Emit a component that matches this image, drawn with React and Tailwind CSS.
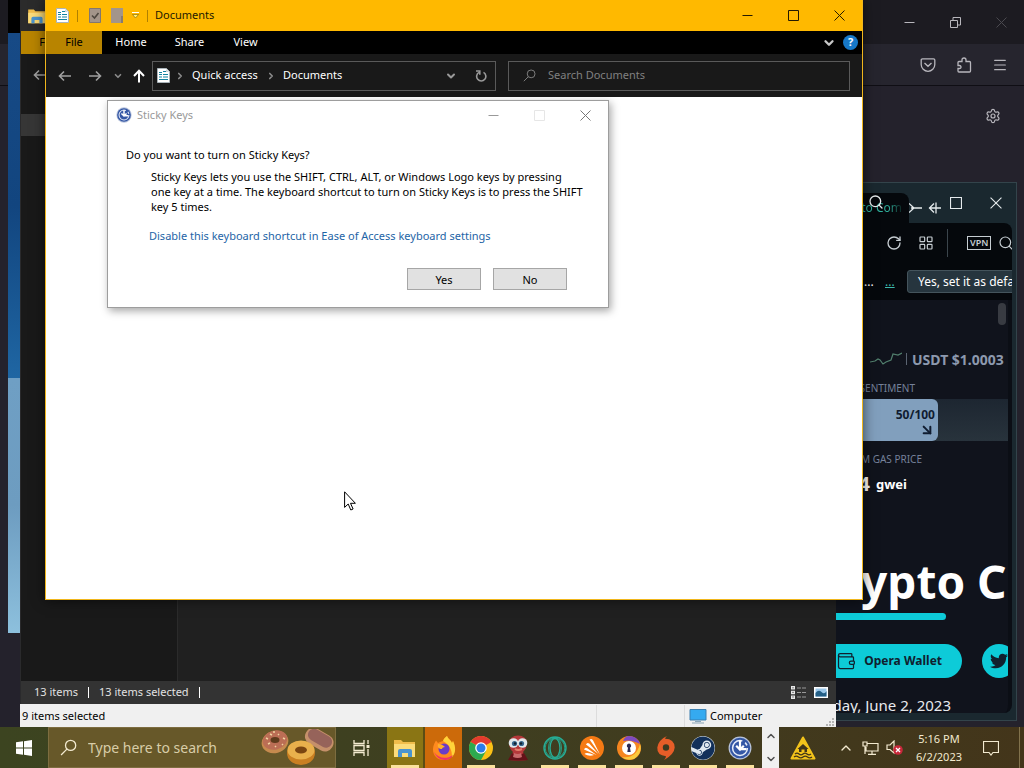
import { ArrowDownRight, ChevronDown, ChevronUp, LayoutGrid, Menu, RotateCw, Search, Settings, Wallet } from 'lucide-react';
import { FaSteam, FaTwitter } from 'react-icons/fa';

function DocIcon({ className }) {
  return (
    <svg viewBox="0 0 13 15" className={className}>
      <path d="M.5.5h9l3 3v11H.5z" fill="#fff" stroke="#aab4ba" />
      <path d="M2 4.5h3M6 3.5h3M2 6.5h3M6 6.5h5M2 9h3M6 9h5M2 11.5h9" stroke="#1583a0" strokeWidth="1.2" />
      <path d="M9 1v3h3z" fill="#c9d5da" />
    </svg>
  );
}

function FolderIcon({ className }) {
  return (
    <svg viewBox="0 0 22 20" className={className}>
      <path d="M0 2h7l2 2h12v15H0z" fill="#f0bd4b" />
      <path d="M0 6h21v13H0z" fill="#fbdc7a" />
      <path d="M4 19v-6q0-2 2-2h10q2 0 2 2v6h-4v-4H8v4z" fill="#4a94cf" />
    </svg>
  );
}

function AccessIcon({ className }) {
  return (
    <svg viewBox="0 0 22 22" className={className}>
      <circle cx="11" cy="11" r="10.5" fill="#b9c4dc" />
      <circle cx="11" cy="11" r="9.4" fill="#3457a5" />
      <circle cx="11" cy="11" r="6.8" fill="none" stroke="#e6ecf8" strokeWidth="1.4" strokeDasharray="34 3 3 3" />
      <path d="M11 4v8M7.500 9l3.500 3.500L14.500 9M11 12h6" fill="none" stroke="#fff" strokeWidth="2" />
    </svg>
  );
}

function MinIcon({ className }) {
  return <svg viewBox="0 0 11 11" className={className}><path d="M.5 5.500h10" stroke="currentColor" fill="none" /></svg>;
}

function MaxIcon({ className }) {
  return <svg viewBox="0 0 11 11" className={className}><path d="M.5.5h10v10H.5z" stroke="currentColor" fill="none" /></svg>;
}

function CloseIcon({ className }) {
  return <svg viewBox="0 0 11 11" className={className}><path d="M.5.5l10 10M10.500.5l-10 10" stroke="currentColor" fill="none" /></svg>;
}

function ArrowIcon({ className }) {
  return <svg viewBox="0 0 14 12" className={className}><path d="M13 6H1.500M6 1.500L1.500 6 6 10.500" stroke="currentColor" strokeWidth="1.6" fill="none" /></svg>;
}

function Magnifier({ className }) {
  return <svg viewBox="0 0 16 16" className={className}><circle cx="10" cy="6" r="4.800" fill="none" stroke="currentColor" strokeWidth="1.200" /><path d="M6.500 9.500L1 15" stroke="currentColor" strokeWidth="1.200" /></svg>;
}

function FirefoxWindow() {
  return (
    <section className="absolute inset-0 flex flex-col bg-[#24222c] text-[#b8b7bd]">
      <div className="flex h-11 items-center justify-end bg-[#1c1b21]">
        <button aria-label="Minimize" className="flex w-[46px] justify-center"><MinIcon className="size-[11px]" /></button>
        <button aria-label="Restore" className="flex w-[46px] justify-center">
          <svg viewBox="0 0 11 11" className="size-[11px]"><path d="M.5 3.500h7v7h-7zM3 3V.5h7.500V8H8" fill="none" stroke="currentColor" /></svg>
        </button>
        <button aria-label="Close" className="flex w-[46px] justify-center text-[#4a494f]"><CloseIcon className="size-[11px]" /></button>
      </div>
      <div className="flex h-[42px] items-center justify-end border-b border-[#0f0e14] bg-[#26252e] pr-[6px]">
        <button aria-label="Pocket" className="flex w-9 justify-center">
          <svg viewBox="0 0 16 16" className="size-4"><path d="M2.500 1.800h11q1.300 0 1.300 1.300V7.500a6.800 6.800 0 0 1-13.600 0V3.100q0-1.300 1.300-1.300zM4.500 6L8 9.300 11.500 6" fill="none" stroke="currentColor" strokeWidth="1.300" /></svg>
        </button>
        <button aria-label="Extensions" className="flex w-9 justify-center">
          <svg viewBox="0 0 16 16" className="size-4"><path d="M2 5.500q0-1 1-1h3V3q0-2 2-2t2 2v1.500h3.500q1 0 1 1V14q0 1-1 1H3q-1 0-1-1v-2.500h1.500q1.500 0 1.500-1.500T3.500 8.500H2z" fill="none" stroke="currentColor" strokeWidth="1.300" /></svg>
        </button>
        <button aria-label="Menu" className="flex w-9 justify-center"><Menu className="size-4" strokeWidth={1.800} /></button>
      </div>
      <div className="flex justify-end pt-[22px] pr-[23px]">
        <button aria-label="Settings"><Settings className="size-4" strokeWidth={1.800} /></button>
      </div>
    </section>
  );
}

function PhotoWindow() {
  return (
    <section className="absolute top-0 left-2 flex h-[633px] w-3 flex-col">
      <div className="h-[33px] bg-black" />
      <div className="h-[345px] bg-linear-to-b from-[#174a86] via-[#12457f] to-[#1f66a3]" />
      <div className="flex-1 bg-linear-to-b from-[#6f9fc4] via-[#6d9cc0] to-[#8dc0dd]" />
    </section>
  );
}

function BackExplorer() {
  return (
    <section className="absolute top-0 left-5 flex h-[704px] w-[816px] flex-col border-l border-[#2a2a2c] bg-[#191919] text-[11px] text-[#e2e2e2]">
      <div className="flex h-[31px] items-center bg-[#2b2b2b] pl-[7px]"><FolderIcon className="h-4 w-[18px]" /></div>
      <div className="flex h-[23px] bg-black"><button className="w-[54px] bg-[#b88400] text-black">File</button></div>
      <div className="flex h-[60px] items-start pt-[15px] pl-3 text-[#a0a0a0]"><ArrowIcon className="h-3 w-[14px]" /></div>
      <div className="h-[22px] w-[156px] bg-[#363636]" />
      <div className="flex flex-1">
        <nav className="w-[156px] bg-[#191919]" />
        <div className="flex-1 border-l border-[#2b2b2b] bg-[#202020]" />
      </div>
      <footer className="flex h-[23px] items-center bg-[#333333] pr-2 pl-[13px]">
        <span>13 items</span>
        <span className="mx-[10px] h-[11px] w-px bg-white" />
        <span>13 items selected</span>
        <span className="ml-[10px] h-[11px] w-px bg-white" />
        <button aria-label="Details view" className="ml-auto">
          <svg viewBox="0 0 16 13" className="h-[13px] w-4"><path d="M0 0h4v3.500H0zM0 4.700h4v3.500H0zM0 9.400h4v3.500H0z" fill="#e8e8e8" /><path d="M1.500 1.800h1M1.500 6.400h1M1.500 11h1" stroke="#222" /><path d="M6 2h10M6 6.500h10M6 11h10" stroke="#999" strokeDasharray="4 1" /></svg>
        </button>
        <button aria-label="Thumbnail view" className="ml-[7px]">
          <svg viewBox="0 0 14 11" className="h-[11px] w-[14px]"><path d="M0 0h14v11H0z" fill="#fff" /><path d="M1.500 1.500h11v8h-11z" fill="#9cc8ea" /><path d="M1.500 6q3-4 6-1t5-1v5.500h-11z" fill="#245f86" /></svg>
        </button>
      </footer>
    </section>
  );
}

function LegacyStatusBar() {
  return (
    <section className="absolute top-[704px] left-5 flex h-[23px] w-[816px] items-center bg-[#f0f0f0] pt-px pl-[2px] text-[11px] text-black">
      <span className="flex-1">9 items selected</span>
      <span className="h-full w-[88px] border-l border-[#dcdcdc]" />
      <span className="flex h-full w-[142px] items-center gap-[3px] border-l border-[#dcdcdc] pl-1">
        <svg viewBox="0 0 18 15" className="h-[15px] w-[18px]"><path d="M1 .5h16v10.500H1z" fill="#35aaf0" stroke="#3a7fb0" /><path d="M3 14h12M6 12.500h6" stroke="#8aa5b8" /></svg>
        Computer
      </span>
      <svg viewBox="0 0 9 9" className="mr-[1px] size-[9px] self-end"><path d="M6 0h2v2H6zM3 3h2v2H3zM6 3h2v2H6zM0 6h2v2H0zM3 6h2v2H3zM6 6h2v2H6z" fill="#b5b5b5" /></svg>
    </section>
  );
}

function OperaWindow() {
  return (
    <section className="absolute top-[182px] left-[780px] flex h-[539px] w-[237px] flex-col border border-[#33444b] bg-[#1a282f] pr-1 pb-[7px] text-white">
      <div className="relative flex h-10 shrink-0 items-center text-[#e5eaec]">
        <div className="mt-[10px] flex h-[30px] w-[128px] shrink-0 items-center justify-end self-start rounded-tr-lg bg-[#05080c] pr-[7px]">
          <span className="bg-linear-to-r from-[#2fb09c] from-80% to-[#0a201f] bg-clip-text text-[12px] whitespace-nowrap text-transparent">Crypto Com</span>
        </div>
        <Search className="absolute top-[11px] left-[87px] size-4" strokeWidth={2} />
        <svg viewBox="0 0 33 12" className="mt-[9px] h-3 w-[33px] shrink-0"><path d="M0 1.500L5 6 0 10.500M2 6h11M20 6h12M25 1.500L20.500 6 25 10.500M27 .5v11" fill="none" stroke="currentColor" strokeWidth="1.300" /></svg>
        <button aria-label="Maximize" className="ml-2"><MaxIcon className="size-3" /></button>
        <button aria-label="Close" className="ml-[28px]"><CloseIcon className="size-3" /></button>
      </div>
      <div className="flex h-10 shrink-0 items-center overflow-hidden rounded-tr-lg bg-[#05080c] pl-[105px] text-[#c6cdd2]">
        <button aria-label="Reload" className="shrink-0"><RotateCw className="size-4" strokeWidth={2} /></button>
        <button aria-label="Speed dial" className="ml-4 shrink-0"><LayoutGrid className="size-4" strokeWidth={1.800} /></button>
        <span className="ml-[13px] h-7 w-px shrink-0 bg-[#3b454c]" />
        <span className="ml-[19px] shrink-0 border border-[#c6cdd2] px-[2px] text-[9px] leading-[12px] font-semibold">VPN</span>
        <Search className="ml-[7px] size-4 shrink-0" strokeWidth={1.800} />
      </div>
      <div className="flex h-[37px] shrink-0 items-center overflow-hidden bg-[#05080c] pl-[83px] text-[12px] whitespace-nowrap">
        <span className="w-[21px] shrink-0">...</span>
        <span className="w-[22px] shrink-0"><a href="#more" className="text-[#3cb8ac] underline">...</a></span>
        <button className="h-[23px] shrink-0 rounded-[3px] border border-[#44545c] bg-[#26353e] px-[10px] text-[12px]">Yes, set it as default</button>
      </div>
      <div className="flex min-h-0 flex-1 flex-col overflow-hidden rounded-b-lg border-r-4 border-[#0b0e15] bg-[#10131c]">
        <div className="flex justify-end pt-[3px] pr-[2px]"><span className="h-[22px] w-2 rounded-full bg-[#383b42]" /></div>
        <div className="mt-6 flex h-5 items-center gap-1 pl-[89px] font-bold whitespace-nowrap text-[#8d99ae]">
          <svg viewBox="0 0 32 14" className="h-[14px] w-8 shrink-0"><path d="M0 10l5-1 3-2 2 1 3 4 3-2 5-2 2-6 5 1 4-2" fill="none" stroke="#52806e" strokeWidth="1.200" /></svg>
          <span className="h-3 w-px shrink-0 bg-[#5b6472]" />
          <span className="pl-px text-[14px]">USDT $1.0003</span>
        </div>
        <p className="mt-3 w-[134px] text-right text-[10px] leading-[14px] text-[#75819a]">SENTIMENT</p>
        <div className="mt-1 flex h-[42px] shrink-0 bg-linear-to-b from-[#1d2631] to-[#28333c]">
          <div className="flex w-[157px] flex-col items-end justify-center rounded-r-md bg-[#819fbd] pt-[6px] pr-[3px] text-[#101c30]">
            <span className="text-[12px] leading-[14px] font-bold">50/100</span>
            <ArrowDownRight className="size-4" strokeWidth={3} />
          </div>
        </div>
        <p className="mt-[11px] w-[141px] text-right text-[10px] leading-[14px] whitespace-nowrap text-[#75819a]">MEDIUM GAS PRICE</p>
        <p className="mt-1 flex w-[126px] items-center justify-end gap-[6px] text-[20px] leading-[28px] font-bold">4 <span className="text-[13px]">gwei</span></p>
        <h1 className="mt-[51px] pl-[30px] text-[46px] leading-[64px] font-bold whitespace-nowrap">Crypto C</h1>
        <div className="h-[7px] w-[165px] shrink-0 rounded-full bg-[#0dcbd8]" />
        <div className="mt-6 flex shrink-0 gap-5 text-[#10202e]">
          <button className="flex h-[34px] w-[181px] shrink-0 items-center justify-end gap-2 rounded-r-full bg-[#0dcbd8] pr-5 text-[12px] font-bold whitespace-nowrap"><Wallet className="size-5" strokeWidth={1.500} />Opera Wallet</button>
          <button aria-label="Twitter" className="flex size-[34px] shrink-0 items-center justify-center rounded-full bg-[#0dcbd8]"><FaTwitter className="size-[18px]" /></button>
        </div>
        <p className="mt-4 w-[170px] text-right text-[15px] leading-[22px] whitespace-nowrap text-[#e8eaee]">Friday, June 2, 2023</p>
      </div>
    </section>
  );
}

function StickyKeysDialog() {
  return (
    <div role="dialog" aria-label="Sticky Keys" className="absolute top-[100px] left-[107px] flex h-[208px] w-[502px] flex-col border border-[#9d9d9d] bg-white text-[11px] text-black shadow-[2px_3px_8px_rgba(0,0,0,0.35)]">
      <div className="flex h-7 items-center pl-2 text-[#999]">
        <AccessIcon className="size-4" />
        <span className="ml-[5px] flex-1 text-[11px]">Sticky Keys</span>
        <button aria-label="Minimize" className="flex w-[46px] justify-center"><MinIcon className="size-[11px]" /></button>
        <button aria-label="Maximize" disabled className="flex w-[46px] justify-center text-[#e6e6e6]"><MaxIcon className="size-[11px]" /></button>
        <button aria-label="Close" className="flex w-[46px] justify-center text-[#777]"><CloseIcon className="size-[11px]" /></button>
      </div>
      <div className="flex flex-1 flex-col pl-[18px] leading-[15px] whitespace-nowrap">
        <p className="mt-[18px]">Do you want to turn on Sticky Keys?</p>
        <p className="mt-[7px] pl-[25px]">
          Sticky Keys lets you use the SHIFT, CTRL, ALT, or Windows Logo keys by pressing<br />
          one key at a time. The keyboard shortcut to turn on Sticky Keys is to press the SHIFT<br />
          key 5 times.
        </p>
        <a href="#settings" className="mt-[14px] pl-[23px] text-[#1e64a6]">Disable this keyboard shortcut in Ease of Access keyboard settings</a>
        <div className="mt-[25px] flex justify-end gap-3 pr-[41px]">
          <button className="h-[22px] w-[74px] border border-[#a6a6a6] bg-[#e1e1e1]">Yes</button>
          <button className="h-[22px] w-[74px] border border-[#a6a6a6] bg-[#e1e1e1]">No</button>
        </div>
      </div>
    </div>
  );
}

function DocumentsExplorer() {
  return (
    <section className="absolute top-0 left-[45px] flex h-[600px] w-[818px] flex-col border-x border-b border-[#f0b61c] bg-white text-[11px] shadow-[0_0_12px_rgba(0,0,0,0.6)]">
      <header className="flex h-[31px] items-center bg-[#ffb900] pl-[10px] text-[#241a00]">
        <DocIcon className="h-[15px] w-[13px]" />
        <span className="ml-2 h-3 w-px bg-[#b08000]" />
        <button aria-label="Properties" className="ml-[11px]">
          <svg viewBox="0 0 12 15" className="h-[15px] w-3"><path d="M.5.5h11v14H.5z" fill="#a3958a" stroke="#83776e" /><path d="M3 7.500l2.500 2.500L9.500 5" fill="none" stroke="#4e473f" strokeWidth="1.600" /></svg>
        </button>
        <button aria-label="New folder" className="ml-[10px]">
          <svg viewBox="0 0 12 15" className="h-[15px] w-3"><path d="M0 0h12v15H0z" fill="#a3958a" /><path d="M10 8h2v7h-2z" fill="#877b70" /></svg>
        </button>
        <button aria-label="Customize" className="ml-[9px]">
          <svg viewBox="0 0 7 7" className="size-[7px]"><path d="M0 .5h7" stroke="#fff" /><path d="M.5 2.500h6L3.500 6z" fill="#fff27a" stroke="#7d6200" strokeWidth=".6" /></svg>
        </button>
        <span className="ml-2 h-3 w-px bg-[#b08000]" />
        <h2 className="ml-[7px] flex-1">Documents</h2>
        <button aria-label="Minimize" className="flex w-[46px] justify-center"><MinIcon className="size-[11px]" /></button>
        <button aria-label="Maximize" className="flex w-[46px] justify-center"><MaxIcon className="size-[11px]" /></button>
        <button aria-label="Close" className="flex w-[46px] justify-center"><CloseIcon className="size-[11px]" /></button>
      </header>
      <div className="flex h-[23px] items-center bg-black text-white">
        <button className="h-full w-[56px] bg-[#b88400] text-black">File</button>
        <button className="w-[58px]">Home</button>
        <button className="w-[59px]">Share</button>
        <button className="w-[53px]">View</button>
        <button aria-label="Expand ribbon" className="ml-auto text-[#c8c8c8]"><ChevronDown className="size-[14px]" strokeWidth={4} /></button>
        <button aria-label="Help" className="mr-1 ml-[7px] flex size-[15px] items-center justify-center rounded-full bg-[#1778c8] text-[11px] font-bold">?</button>
      </div>
      <div className="flex h-[43px] items-center bg-[#191919] pl-1 text-white">
        <button aria-label="Back" className="flex w-[30px] justify-center text-[#a0a0a0]"><ArrowIcon className="h-3 w-[14px]" /></button>
        <button aria-label="Forward" className="flex w-[30px] justify-center text-[#a0a0a0]"><ArrowIcon className="h-3 w-[14px] rotate-180" /></button>
        <button aria-label="Recent" className="flex w-4 justify-center text-[#8a8a8a]"><ChevronDown className="size-[10px]" strokeWidth={4} /></button>
        <button aria-label="Up" className="flex w-[26px] justify-center">
          <svg viewBox="0 0 12 14" className="h-[14px] w-3"><path d="M6 13.500V2M1 7l5-5.200L11 7" fill="none" stroke="currentColor" strokeWidth="2" /></svg>
        </button>
        <div className="flex h-[30px] w-[344px] items-center border border-[#5a5a5a] pl-1">
          <DocIcon className="h-[15px] w-[13px]" />
          <ChevronDown className="ml-[5px] size-[10px] -rotate-90 text-[#8a8a8a]" strokeWidth={4} />
          <span className="ml-[7px] w-[69px] whitespace-nowrap">Quick access</span>
          <ChevronDown className="ml-[5px] size-[10px] -rotate-90 text-[#8a8a8a]" strokeWidth={4} />
          <span className="ml-[7px] flex-1">Documents</span>
          <button aria-label="Previous locations" className="text-[#999]"><ChevronDown className="size-3" strokeWidth={4} /></button>
          <button aria-label="Refresh" className="mr-2 ml-[18px] text-[#999]">
            <svg viewBox="0 0 12 12" className="size-3"><path d="M8.500 2.400A4.600 4.600 0 1 1 4 2.400M1 1h3.800v3.800" fill="none" stroke="currentColor" strokeWidth="1.600" /></svg>
          </button>
        </div>
        <label className="ml-3 mr-3 flex h-[30px] flex-1 items-center border border-[#5a5a5a] pl-[14px] text-[#808080]">
          <Magnifier className="size-[13px]" />
          <input type="text" aria-label="Search Documents" placeholder="Search Documents" className="ml-3 min-w-0 flex-1 bg-transparent outline-none placeholder:text-[#808080]" />
        </label>
      </div>
    </section>
  );
}

function Bakery() {
  return (
    <svg viewBox="0 0 74 38" className="h-[38px] w-[74px]">
      <ellipse cx="14" cy="13" rx="13.500" ry="11" fill="#c68a4e" transform="rotate(-15 14 13)" />
      <ellipse cx="14" cy="11" rx="12.500" ry="9.500" fill="#bb6e55" transform="rotate(-15 14 11)" />
      <ellipse cx="14" cy="11" rx="4.500" ry="3" fill="#5e3b1c" />
      <path d="M5 9l2 1M9 5l2 1M18 5l-1 1M22 9l2 1M7 15l2-1M14 18l1-1M21 15l1 1M12 3h2" stroke="#f0d2a0" strokeWidth="1.500" />
      <g transform="rotate(30 58 11)">
        <rect x="43" y="2" width="30" height="17" rx="8" fill="#c5906a" />
        <rect x="45" y="3" width="26" height="12" rx="6" fill="#96635a" />
      </g>
      <ellipse cx="40" cy="24" rx="14" ry="12" fill="#c97f22" />
      <ellipse cx="40" cy="21" rx="13.500" ry="9.500" fill="#e9b04c" />
      <ellipse cx="40" cy="21" rx="6" ry="3.500" fill="#7a4511" />
    </svg>
  );
}

function FirefoxIcon() {
  return (
    <svg viewBox="0 0 24 24" className="size-6">
      <path d="M12 24C4.500 24 .8 18.500 1 13 1 9.500 3 6 4 4.500l2 2.500C8 6 10 5 11 5c1-3 3-4 4-5 1 3 4 4 5 7l1-2c4 9 1 19-9 19z" fill="#ff8a1e" />
      <path d="M15 0c1 3 4 4 5 7l1-2c3 6 3 12-1 16 0-7-2-12-9-16 1-3 3-4 4-5z" fill="#ffd43a" />
      <path d="M2 16c2 5 6 8 11 8 3 0 6-1 8-5-7 5-15 3-19-3z" fill="#ee3565" />
      <circle cx="12" cy="13" r="5.500" fill="#6a3cc8" />
      <path d="M6 8c3 0 5 1 7 3-2 0-3 1-3 2-3 0-5-2-4-5z" fill="#ffb02a" />
    </svg>
  );
}

function ChromeIcon() {
  return (
    <svg viewBox="0 0 24 24" className="size-6">
      <circle cx="12" cy="12" r="12" fill="#fbc116" />
      <path d="M12 12L1.600 6a12 12 0 0 1 20.800 0z" fill="#e33b2e" />
      <path d="M12 12L1.600 6A12 12 0 0 0 12 24l5-9z" fill="#2da94f" />
      <circle cx="12" cy="12" r="5.800" fill="#fff" />
      <circle cx="12" cy="12" r="4.500" fill="#2b7de9" />
    </svg>
  );
}

function RedCreatureIcon() {
  return (
    <svg viewBox="0 0 24 26" className="h-[26px] w-6">
      <path d="M3 7q1-6 9-6.500Q20 1 21 7l-1 6q-2 3-3 4l4 8q-9 1.500-18 0l4-8q-4-3-4-10z" fill="#b4383a" />
      <path d="M2 25l4-7q6 4 12 0l4 7q-10 1.500-20 0z" fill="#641218" />
      <path d="M8 18q4 2 7 0l1 4q-4 2-9 0z" fill="#c8696a" />
      <circle cx="7.500" cy="8" r="4.800" fill="#dfe9ec" /><circle cx="16.500" cy="8" r="4.800" fill="#dfe9ec" />
      <circle cx="8.500" cy="8.500" r="2.600" fill="#35658d" /><circle cx="15.500" cy="8.500" r="2.600" fill="#35658d" />
      <circle cx="9" cy="8.500" r="1.200" fill="#10202c" /><circle cx="15" cy="8.500" r="1.200" fill="#10202c" />
      <path d="M9 14q3 2 7 0" stroke="#e37d6a" strokeWidth="2" fill="none" />
    </svg>
  );
}

function OperaIcon() {
  return (
    <svg viewBox="0 0 24 24" className="size-6" fill="none" stroke="#26ad96" strokeWidth="1.400">
      <circle cx="12" cy="12" r="11" /><circle cx="12" cy="12" r="9.800" strokeWidth=".8" />
      <ellipse cx="12" cy="12" rx="5" ry="9.500" /><ellipse cx="12" cy="12" rx="6.500" ry="10.500" strokeWidth=".8" />
    </svg>
  );
}

function AvastIcon() {
  return (
    <svg viewBox="0 0 24 24" className="size-6">
      <circle cx="12" cy="12" r="12" fill="#f57a14" />
      <path d="M9.500 3.500q2.500-1.500 3.600 1L20 18.500zM6 8.500q1-2.500 3.300-1L18.500 18zM4 13.500q1-2.500 3.300-1.300L16.500 19zM4.500 18q2-2.300 9.500 1-5 1.800-9.500-1z" fill="#fff" />
    </svg>
  );
}

function SecureBrowserIcon() {
  return (
    <svg viewBox="0 0 24 24" className="size-6">
      <circle cx="12" cy="12" r="12" fill="#f6851f" />
      <path d="M12 0a12 12 0 0 1 11 8q-9-5-17-3 2-5 6-5z" fill="#7e4bc0" />
      <path d="M23 8q3 9-6 15-8 2-12-2 14 2 18-13z" fill="#f9ca3e" />
      <circle cx="12" cy="12" r="7" fill="#fff" />
      <path d="M12 7.500a2.300 2.300 0 0 1 1 4.300l.7 4.200h-3.400l.7-4.200a2.300 2.300 0 0 1 1-4.300z" fill="#2c2b55" />
    </svg>
  );
}

function OriginIcon() {
  return (
    <svg viewBox="0 0 24 26" className="h-6 w-[22px]">
      <path d="M13 0q-2 2-2 3 10 0 10.500 9.500Q21 20 10 26q2-2 2-4Q2 21 2.500 12.500 4 4 13 0z" fill="#e65d28" />
      <circle cx="12" cy="12.500" r="3.500" fill="#3d3a20" />
    </svg>
  );
}

function HazardIcon() {
  return (
    <svg viewBox="0 0 26 24" className="h-6 w-[26px]">
      <path d="M13 1.500L24.500 22.500h-23z" fill="#f2c31b" stroke="#f2c31b" strokeWidth="2" strokeLinejoin="round" />
      <path d="M7.500 13L13 8l5.500 5h-1.500v3h-2.500v-2.500h-3V16H9v-3z" fill="#40351a" />
      <path d="M5 18q2-1.800 4 0t4 0 4 0 4 0M4 21q2.200-1.800 4.500 0t4.500 0 4.500 0 4.500 0" fill="none" stroke="#40351a" strokeWidth="1.300" />
    </svg>
  );
}

const apps = [
  { name: 'File Explorer', icon: <FolderIcon className="h-5 w-[22px]" />, slot: 'w-[38px] bg-[#8a7514] border-r-2 border-[#5a4d14]', running: true },
  { name: 'Firefox', icon: <FirefoxIcon />, slot: 'w-[37px] bg-[#cc6a0a]', running: false },
  { name: 'Chrome', icon: <ChromeIcon />, slot: 'w-[37px]', running: true },
  { name: 'Creature', icon: <RedCreatureIcon />, slot: 'w-[37px]', running: false },
  { name: 'Opera', icon: <OperaIcon />, slot: 'w-[37px]', running: true },
  { name: 'Avast', icon: <AvastIcon />, slot: 'w-[37px]', running: true },
  { name: 'Secure Browser', icon: <SecureBrowserIcon />, slot: 'w-[37px]', running: true },
  { name: 'Origin', icon: <OriginIcon />, slot: 'w-[37px]', running: true },
  { name: 'Steam', icon: <FaSteam className="size-6 rounded-full bg-[#dfe8f0] text-[#12305a]" />, slot: 'w-[37px]', running: true },
  { name: 'Ease of Access', icon: <AccessIcon className="size-6" />, slot: 'w-[37px]', running: true },
];

function Taskbar() {
  return (
    <footer className="flex h-[41px] items-center bg-linear-to-r from-[#3c4420] via-[#3f3e20] to-[#43351a] text-[#f3ead0]">
      <button aria-label="Start" className="flex w-12 justify-center">
        <svg viewBox="0 0 16 16" className="size-4"><path d="M0 2.300L7 1.300v6.200H0zM8 1.200L16 0v7.500H8zM0 8.500h7v6.200l-7-1zM8 8.500h8V16l-8-1.200z" fill="#fff" /></svg>
      </button>
      <label className="flex h-full w-[288px] items-center border border-[#7d6d40] bg-[#675829] pl-[11px]">
        <Magnifier className="size-[17px]" />
        <input type="text" aria-label="Type here to search" placeholder="Type here to search" className="ml-[11px] w-[173px] bg-transparent text-[14px] outline-none placeholder:text-[#d8cda8]" />
        <Bakery />
      </label>
      <button aria-label="Task view" className="flex w-[51px] justify-center">
        <svg viewBox="0 0 17 16" className="h-4 w-[17px]" fill="none" stroke="currentColor" strokeWidth="1.300"><path d="M1 0v3.500h10V0M1 16v-3.500h10V16M1 5.500h10v5H1zM15 0v4M15 9v7" /><path d="M13.500 5h3v3h-3z" fill="currentColor" stroke="none" /></svg>
      </button>
      {apps.map(app => (
        <button key={app.name} aria-label={app.name} className={`flex h-full flex-col items-center ${app.slot}`}>
          <span className="flex flex-1 items-center pt-1">{app.icon}</span>
          <span className={app.running ? 'h-[3px] w-7 bg-[#fbe29c]' : 'h-[3px]'} />
        </button>
      ))}
      <div className="ml-1 flex h-full w-[17px] flex-col items-center justify-between bg-[#f0f0f0] py-[3px] text-[#505050]">
        <button aria-label="Scroll up"><ChevronUp className="size-3" strokeWidth={3} /></button>
        <button aria-label="Scroll down"><ChevronDown className="size-3" strokeWidth={3} /></button>
      </div>
      <button aria-label="Flood warning" className="ml-[11px]"><HazardIcon /></button>
      <div className="ml-auto flex h-full items-center">
        <button aria-label="Show hidden icons"><ChevronUp className="size-4" strokeWidth={2} /></button>
        <svg viewBox="0 0 17 14" className="ml-2 h-[14px] w-[17px]" fill="none" stroke="currentColor" strokeWidth="1.200"><path d="M5 2.500h11v7.500H4V6M10 10v3M6 13.300h8M1 1h4v4H1zM3 5v8" /></svg>
        <svg viewBox="0 0 17 15" className="ml-[7px] h-[15px] w-[17px]"><path d="M1 5h3l4-4v12L4 9.500H1z" fill="none" stroke="currentColor" strokeWidth="1.200" /><circle cx="12" cy="10" r="4.800" fill="#c8283a" /><path d="M10 8l4 4M14 8l-4 4" stroke="#fff" strokeWidth="1.300" /></svg>
        <time className="ml-[6px] w-[60px] text-center text-[11px] leading-[18px]">5:16 PM<br />6/2/2023</time>
        <button aria-label="Notifications" className="ml-[14px]">
          <svg viewBox="0 0 16 16" className="size-4"><path d="M.5 1.500h15v11H10L8 15l-2-2.500H.5z" fill="none" stroke="currentColor" strokeWidth="1.200" /></svg>
        </button>
        <span className="mr-1 ml-5 h-full w-px bg-[#81724c]" />
      </div>
    </footer>
  );
}

function Cursor() {
  return (
    <svg viewBox="0 0 12 20" className="pointer-events-none absolute top-[491px] left-[344px] h-5 w-3">
      <path d="M.6.8v15.600l3.600-3.400 2.600 6 2.300-1-2.600-5.700h4.900z" fill="#fff" stroke="#000" />
    </svg>
  );
}

export default function App() {
  return (
    <div className="flex min-h-screen flex-col overflow-hidden bg-[#24222c] font-['Noto_Sans','Open_Sans',sans-serif]">
      <main className="relative flex-1 overflow-hidden">
        <FirefoxWindow />
        <PhotoWindow />
        <OperaWindow />
        <BackExplorer />
        <LegacyStatusBar />
        <DocumentsExplorer />
        <StickyKeysDialog />
        <Cursor />
      </main>
      <Taskbar />
    </div>
  );
}
